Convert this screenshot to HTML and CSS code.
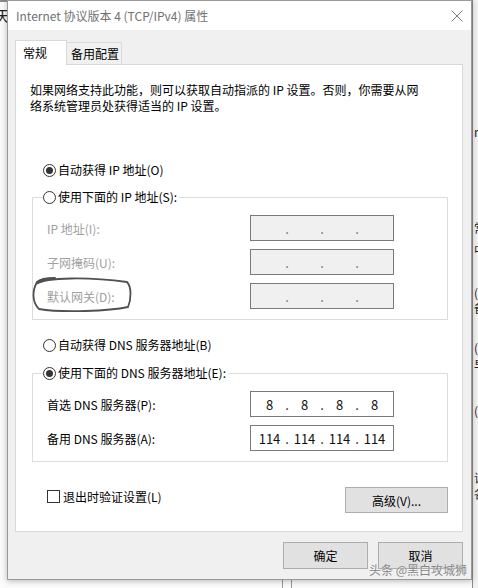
FILE: index.html
```html
<!DOCTYPE html>
<html lang="zh-CN">
<head>
    <meta charset="UTF-8">
    <meta name="viewport" content="width=device-width, initial-scale=1.0">
    <title>Internet 协议版本 4 (TCP/IPv4) 属性</title>
    <link rel="stylesheet" href="styles.css">
</head>
<body>
<div class="screen">
    <!-- window behind, left edge -->
    <div class="bg-left"><span class="bg-char">天</span></div>

    <div class="center">
        <div class="dialog">
            <div class="titlebar">
                <span class="title">Internet 协议版本 4 (TCP/IPv4) 属性</span>
                <svg class="close" width="12" height="12" viewBox="0 0 12 12">
                    <path d="M0.5 0.5 L11.5 11.5 M11.5 0.5 L0.5 11.5" stroke="#7a7a7a" stroke-width="1" fill="none"/>
                </svg>
            </div>

            <div class="dialog-body">
                <div class="tabs">
                    <div class="tab active">常规</div>
                    <div class="tab">备用配置</div>
                </div>

                <div class="panel">
                    <p class="intro">如果网络支持此功能，则可以获取自动指派的 IP 设置。否则，你需要从网<br>络系统管理员处获得适当的 IP 设置。</p>

                    <div class="option first"><span class="radio checked"></span>自动获得 IP 地址(O)</div>

                    <fieldset class="group">
                        <legend class="option"><span class="radio"></span>使用下面的 IP 地址(S):</legend>
                        <div class="field disabled">
                            <span class="field-label">IP 地址(I):</span>
                            <span class="ipbox"><span class="seg"></span><span class="dot">.</span><span class="seg"></span><span class="dot">.</span><span class="seg"></span><span class="dot">.</span><span class="seg"></span></span>
                        </div>
                        <div class="field disabled">
                            <span class="field-label">子网掩码(U):</span>
                            <span class="ipbox"><span class="seg"></span><span class="dot">.</span><span class="seg"></span><span class="dot">.</span><span class="seg"></span><span class="dot">.</span><span class="seg"></span></span>
                        </div>
                        <div class="field disabled">
                            <span class="field-label">默认网关(D):</span>
                            <span class="ipbox"><span class="seg"></span><span class="dot">.</span><span class="seg"></span><span class="dot">.</span><span class="seg"></span><span class="dot">.</span><span class="seg"></span></span>
                        </div>
                    </fieldset>

                    <div class="option dns-auto"><span class="radio"></span>自动获得 DNS 服务器地址(B)</div>

                    <fieldset class="group dns-group">
                        <legend class="option"><span class="radio checked"></span>使用下面的 DNS 服务器地址(E):</legend>
                        <div class="field">
                            <span class="field-label">首选 DNS 服务器(P):</span>
                            <span class="ipbox"><span class="seg">8</span><span class="dot">.</span><span class="seg">8</span><span class="dot">.</span><span class="seg">8</span><span class="dot">.</span><span class="seg">8</span></span>
                        </div>
                        <div class="field">
                            <span class="field-label">备用 DNS 服务器(A):</span>
                            <span class="ipbox"><span class="seg">114</span><span class="dot">.</span><span class="seg">114</span><span class="dot">.</span><span class="seg">114</span><span class="dot">.</span><span class="seg">114</span></span>
                        </div>
                    </fieldset>

                    <div class="bottom-row">
                        <label class="check-row"><span class="checkbox"></span>退出时验证设置(L)</label>
                        <button class="btn advanced">高级(V)...</button>
                    </div>
                </div>

                <div class="footer">
                    <button class="btn">确定</button>
                    <button class="btn">取消</button>
                </div>
            </div>
        </div>
        <div class="bg-bottom"><span class="bg-lines"></span></div>
    </div>

    <!-- window behind, right edge -->
    <div class="bg-right">
        <span class="frag f-m">m</span>
        <span class="frag f-2">常</span>
        <span class="frag f-3">中</span>
        <span class="frag f-4">(</span>
        <span class="frag f-5">备</span>
        <span class="frag f-6">(</span>
        <span class="frag f-7">早</span>
        <span class="frag f-8">(</span>
        <span class="frag f-9">议</span>
        <span class="frag f-10">各</span>
    </div>

    <!-- hand drawn mark around the gateway label -->
    <svg class="mark" width="478" height="588" viewBox="0 0 478 588">
        <path d="M36 284 C 46 277, 90 277, 127 282 C 132 287, 131 300, 128 307 C 110 311, 62 313, 39 309 C 32 302, 32 291, 37 282 C 40 279, 48 278, 55 278" stroke="#505050" stroke-width="1.8" fill="none" stroke-linecap="round"/>
    </svg>

    <div class="watermark">头条 @黑白攻城狮</div>
</div>
</body>
</html>
```

FILE: styles.css
```css
* {
    box-sizing: border-box;
}

body {
    margin: 0;
    font-family: "Noto Sans CJK SC", "Microsoft YaHei", sans-serif;
    font-size: 12px;
    color: #000;
}

.screen {
    position: relative;
    display: flex;
    width: 478px;
    height: 588px;
    overflow: hidden;
    background: #fbfbfb;
}

/* background windows */
.bg-left {
    width: 7px;
    flex: none;
    overflow: hidden;
    border-top: 2px solid #8a8a8a;
}

.bg-char {
    display: block;
    margin: 6px 0 0 -5px;
    font-size: 15px;
    line-height: 16px;
    color: #222;
}

.bg-right {
    width: 6px;
    flex: none;
    overflow: hidden;
    display: flex;
    flex-direction: column;
    background: #f2f2f2;
    border-left: 1px solid #8c8c8c;
}

.frag {
    display: block;
    height: 14px;
    line-height: 14px;
    font-size: 12px;
    color: #222;
    margin-left: 1px;
}

.f-m { margin-top: 125px; }
.f-2 { margin-top: 82px; }
.f-3 { margin-top: 8px; }
.f-4 { margin-top: 29px; }
.f-5 { margin-top: 1px; }
.f-6 { margin-top: 26px; }
.f-7 { margin-top: 3px; }
.f-8 { margin-top: 32px; }
.f-9 { margin-top: 53px; }
.f-10 { margin-top: 2px; }

.center {
    width: 465px;
    flex: none;
    display: flex;
    flex-direction: column;
}

.bg-bottom {
    flex: 1;
    padding-left: 275px;
}

.bg-lines {
    display: block;
    width: 10px;
    height: 100%;
    border-left: 1px solid #9a9a9a;
    border-right: 1px solid #9a9a9a;
}

/* dialog */
.dialog {
    position: relative;
    z-index: 1;
    height: 580px;
    flex: none;
    border: 1px solid #9a9a9a;
    background: #f0f0f0;
    box-shadow: 0 1px 6px rgba(0, 0, 0, 0.28);
}

.titlebar {
    height: 29px;
    background: #fff;
    display: flex;
    align-items: center;
    justify-content: space-between;
    padding: 0 8px;
    color: #717171;
}

.title {
    line-height: 16px;
}

.dialog-body {
    padding: 10px 8px 0 7px;
}

.tabs {
    display: flex;
    align-items: flex-start;
    height: 24px;
}

.tab {
    height: 22px;
    margin-top: 2px;
    width: 55px;
    padding-left: 4px;
    line-height: 21px;
    border: 1px solid #d9d9d9;
    border-bottom: none;
    border-left: none;
    background: #f0f0f0;
}

.tab.active {
    position: relative;
    z-index: 1;
    width: 52px;
    height: 25px;
    margin-top: 0;
    margin-bottom: -1px;
    padding-left: 7px;
    line-height: 23px;
    border-left: 1px solid #d9d9d9;
    background: #fff;
}

.panel {
    background: #fff;
    border: 1px solid #d9d9d9;
    padding: 17px 14px 18px 14px;
}

.intro {
    margin: 0;
    line-height: 16px;
}

.option {
    display: flex;
    align-items: center;
    gap: 2px;
    height: 16px;
    line-height: 16px;
}

.option.first {
    margin-top: 48px;
    padding-left: 13px;
}

.option.dns-auto {
    margin-top: 17px;
    padding-left: 13px;
}

.radio {
    width: 13px;
    height: 13px;
    flex: none;
    border: 1px solid #333;
    border-radius: 50%;
    background: #fff;
    display: inline-flex;
    align-items: center;
    justify-content: center;
}

.radio.checked::after {
    content: "";
    width: 7px;
    height: 7px;
    border-radius: 50%;
    background: #333;
}

.group {
    margin: 11px 0 0 2px;
    padding: 10px 0 10px 10px;
    border: 1px solid #dcdcdc;
    min-width: 0;
}

.group.dns-group {
    margin-top: 12px;
}

.group legend {
    padding: 0 2px 0 0;
}

.field {
    display: flex;
    align-items: center;
    height: 26px;
    padding-left: 4px;
}

.field + .field {
    margin-top: 8px;
}

.field-label {
    width: 203px;
    flex: none;
}

.field.disabled .field-label {
    color: #a0a0a0;
}

.ipbox {
    display: flex;
    align-items: center;
    width: 144px;
    height: 26px;
    padding: 0 3px;
    border: 1px solid #7a7a7a;
    background: #fff;
    font-size: 13px;
    color: #111;
}

.field.disabled .ipbox {
    background: #f0f0f0;
    color: #6d6d6d;
}

.seg {
    flex: 1;
    text-align: center;
}

.dot {
    width: 4px;
    text-align: center;
}

.bottom-row {
    display: flex;
    justify-content: space-between;
    align-items: flex-start;
    margin-top: 25px;
}

.check-row {
    display: flex;
    align-items: center;
    gap: 3px;
    height: 16px;
    margin-top: 1px;
    padding-left: 17px;
}

.checkbox {
    width: 13px;
    height: 13px;
    border: 1px solid #333;
    background: #fff;
}

.btn {
    font-family: inherit;
    font-size: 12px;
    color: #000;
    background: #e1e1e1;
    border: 1px solid #adadad;
    border-radius: 0;
    padding: 0;
    width: 85px;
    height: 27px;
}

.btn.advanced {
    width: 103px;
    height: 26px;
}

.footer {
    display: flex;
    justify-content: flex-end;
    gap: 10px;
    padding-top: 10px;
}

/* overlays */
.mark {
    position: absolute;
    top: 0;
    left: 0;
    z-index: 2;
    pointer-events: none;
}

.watermark {
    position: absolute;
    z-index: 3;
    top: 562px;
    right: 11px;
    line-height: 16px;
    color: #858585;
    text-shadow: 0 0 1px rgba(255, 255, 255, 0.9);
}
```
